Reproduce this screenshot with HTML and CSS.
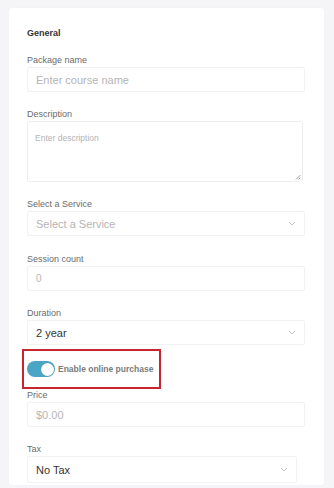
FILE: index.html
```html
<!DOCTYPE html>
<html>
<head>
<meta charset="utf-8">
<link rel="stylesheet" href="styles.css">
</head>
<body>
<div class="card">
  <div class="section-title">General</div>

  <div class="field">
    <label class="label">Package name</label>
    <div class="input placeholder">Enter course name</div>
  </div>

  <div class="field">
    <label class="label">Description</label>
    <div class="textarea">
      <span class="ta-placeholder">Enter description</span>
      <svg class="resize" width="6" height="6" viewBox="0 0 6 6"><path d="M1 5.5L5.5 1M3.5 5.5L5.5 3.5" stroke="#888" stroke-width="0.8" fill="none"/></svg>
    </div>
  </div>

  <div class="field wide-gap">
    <label class="label">Select a Service</label>
    <div class="input select placeholder">
      <span>Select a Service</span>
      <svg class="chev" width="8" height="5" viewBox="0 0 8 5"><path d="M1 1l3 3 3-3" stroke="#c4c4c4" stroke-width="1" fill="none"/></svg>
    </div>
  </div>

  <div class="field">
    <label class="label">Session count</label>
    <div class="input placeholder small">0</div>
  </div>

  <div class="field tight">
    <label class="label">Duration</label>
    <div class="input select value">
      <span>2 year</span>
      <svg class="chev" width="8" height="5" viewBox="0 0 8 5"><path d="M1 1l3 3 3-3" stroke="#c4c4c4" stroke-width="1" fill="none"/></svg>
    </div>
  </div>

  <div class="toggle-row">
    <span class="toggle"><span class="knob"></span></span>
    <span class="toggle-label">Enable online purchase</span>
  </div>

  <div class="field">
    <label class="label">Price</label>
    <div class="input placeholder">$0.00</div>
  </div>

  <div class="field last">
    <label class="label">Tax</label>
    <div class="input select value narrow">
      <span>No Tax</span>
      <svg class="chev" width="8" height="5" viewBox="0 0 8 5"><path d="M1 1l3 3 3-3" stroke="#c4c4c4" stroke-width="1" fill="none"/></svg>
    </div>
  </div>
</div>
</body>
</html>
```

FILE: styles.css
```css
html, body {
  margin: 0;
  padding: 0;
}
body {
  background: #f5f5f7;
  font-family: "Liberation Sans", Arial, sans-serif;
  height: 488px;
  overflow: hidden;
}
.card {
  background: #ffffff;
  margin: 8px 10px 0 9px;
  padding: 19px 19px 2px 18px;
  border-radius: 3px;
  box-shadow: 0 0 2px rgba(0,0,0,0.03);
}
.section-title {
  font-size: 9px;
  font-weight: bold;
  color: #333;
  line-height: 12px;
  margin-bottom: 15px;
}
.field {
  margin-bottom: 16px;
}
.field.wide-gap {
  margin-bottom: 17px;
}
.field.tight {
  margin-bottom: 4px;
}
.field.last {
  margin-bottom: 0;
}
.label {
  display: block;
  font-size: 9px;
  line-height: 12px;
  color: #6b6b6b;
  margin-bottom: 1px;
}
.input {
  box-sizing: border-box;
  height: 25px;
  border: 1px solid #f2f2f2;
  border-radius: 2px;
  padding: 0 8px;
  display: flex;
  align-items: center;
  font-size: 11px;
  background: #fff;
  width: 278px;
}
.placeholder {
  color: #b5b5b5;
}
.placeholder.small {
  font-size: 10px;
}
.value {
  color: #333;
}
.select {
  justify-content: space-between;
  padding-right: 8px;
}
.narrow {
  width: 270px;
  height: 27px;
}
.textarea {
  box-sizing: border-box;
  height: 61px;
  margin-top: 1px;
  border: 1px solid #eeeeee;
  border-radius: 2px;
  padding: 5px 7px;
  position: relative;
  width: 276px;
}
.ta-placeholder {
  font-size: 8.5px;
  color: #b5b5b5;
}
.resize {
  position: absolute;
  right: 1px;
  bottom: 1px;
}
.toggle-row {
  display: flex;
  align-items: center;
  gap: 3px;
  box-sizing: border-box;
  width: 139px;
  height: 40px;
  margin-left: -5px;
  border: 2px solid #c9252f;
  padding-left: 3px;
}
.toggle {
  box-sizing: border-box;
  width: 28px;
  height: 16px;
  border-radius: 8px;
  background: #4ba5c4;
  display: flex;
  align-items: center;
  justify-content: flex-end;
  padding-right: 1px;
  flex-shrink: 0;
}
.knob {
  width: 13px;
  height: 13px;
  border-radius: 50%;
  background: #fff;
  box-shadow: 0 0 1px rgba(0,0,0,0.3);
}
.toggle-label {
  font-size: 8.5px;
  font-weight: bold;
  color: #7b7b7b;
  white-space: nowrap;
}
```
